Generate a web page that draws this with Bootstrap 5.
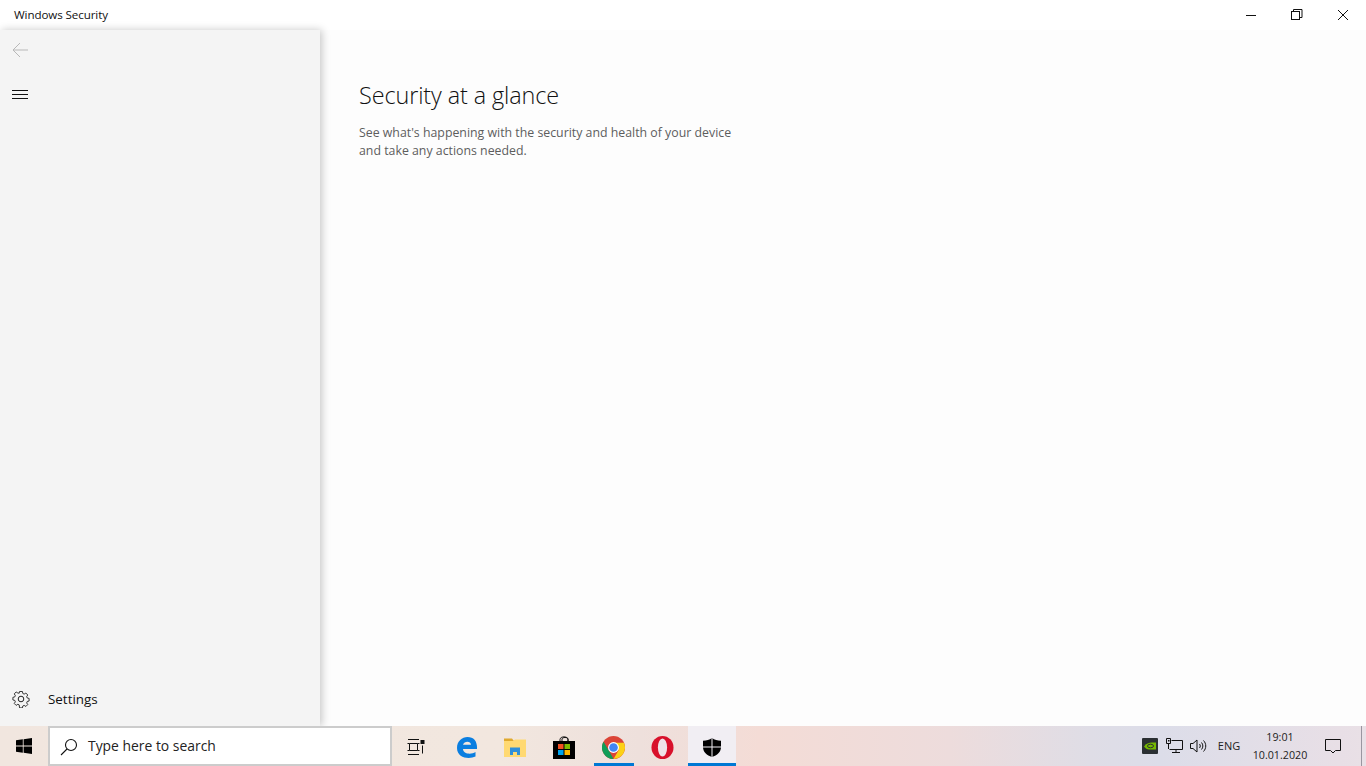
<!doctype html>
<html lang="en"><head><meta charset="utf-8"><title>Windows Security</title>
<link rel="stylesheet" href="https://cdn.jsdelivr.net/npm/bootstrap@5.3.0/dist/css/bootstrap.min.css">
<style>
html,body{height:766px;overflow:hidden;}
body{font-family:"Open Sans","Noto Sans",sans-serif;background:#fff;color:#000;}
.win-root{height:766px;}
.title-row{height:30px;background:#fff;}
.win-title{font-size:11.6px;line-height:29px;padding-left:14px;color:#111;letter-spacing:-.1px;}
.win-ctrl{width:46px;height:30px;}
.win-main{height:696px;background:#fdfdfd;}
.side-pane{width:320px;background:#f4f4f4;box-shadow:2px 0 8px rgba(0,0,0,.22);z-index:1;}
.pane-btn{height:49px;padding-left:12px;}
.pane-top{height:40px;}
.set-row{height:54px;padding-left:12px;}
.set-label{font-size:13.4px;margin-left:18px;color:#111;padding-top:1px;}
.main-pane{padding:49px 0 0 39px;}
.page-title{font-size:23.4px;line-height:32px;font-weight:300;margin:0;color:#111;letter-spacing:-.1px;}
.page-sub{font-size:12.33px;line-height:18px;color:#5d5d5d;margin:13px 0 0;width:380px;}
.task-bar{height:40px;background:linear-gradient(90deg,#f1e6df 0,#f2e7df 500px,#eee0dc 640px,#f4dcd6 760px,#eddcdc 950px,#dfdde6 1090px,#dcdde9 1160px,#e8dfe6 1340px,#e9e0e6 100%);}
.start-btn{width:48px;height:40px;}
.search-box{width:344px;height:40px;background:#fff;border:2px solid #ccc;padding-top:1px;}
.search-glass{margin-left:10px;}
.search-text{font-size:13.9px;color:#222;margin-left:10px;}
.task-ico{width:48px;height:40px;padding-top:2px;position:relative;}
.gap-one{margin-left:1px;}
.gap-two{margin-left:2px;}
.gap-three{margin-left:3px;}
.task-on::after{content:"";position:absolute;left:5px;right:3px;bottom:0;height:3px;background:#0078d4;}
.task-sel{background:#f1eef3;}
.task-sel::after{left:0;right:0;}
.tray-ico{width:24px;height:40px;}
.tray-lang{font-size:11px;width:38px;color:#222;text-align:center;}
.tray-clock{font-size:10.7px;line-height:18px;width:58px;margin-left:3px;text-align:center;color:#222;}
.tray-note{width:48px;height:40px;margin-right:4px;}
.show-edge{width:1px;height:40px;background:#9a96a0;margin-right:4px;}
</style></head><body>
<div class="win-root d-flex flex-column">
 <div class="title-row d-flex justify-content-between">
  <div class="win-title">Windows Security</div>
  <div class="d-flex">
   <div class="win-ctrl d-flex align-items-center justify-content-center"><svg width="12" height="12"><path d="M1 6.500h10" stroke="#111"/></svg></div>
   <div class="win-ctrl d-flex align-items-center justify-content-center"><svg width="12" height="12" fill="none" stroke="#111"><rect x=".5" y="2.500" width="8" height="8"/><path d="M2.500 2.500v-2h8.500v8h-2"/></svg></div>
   <div class="win-ctrl d-flex align-items-center justify-content-center"><svg width="12" height="12"><path d="M1 1l10 10M11 1L1 11" stroke="#111"/></svg></div>
  </div>
 </div>
 <div class="win-main d-flex">
  <div class="side-pane d-flex flex-column">
   <div class="pane-top pane-btn d-flex align-items-center"><svg width="16" height="16" fill="none" stroke="#b8b8b8"><path d="M16 8H1M8 1L1 8l7 7"/></svg></div>
   <div class="pane-btn d-flex align-items-center"><svg width="16" height="16" stroke="#111"><path d="M0 3.500h16M0 7.500h16M0 11.500h16"/></svg></div>
   <div class="flex-grow-1"></div>
   <div class="set-row d-flex align-items-center"><svg width="18" height="18" viewBox="0 0 18 18" fill="none" stroke="#222"><circle cx="9" cy="9" r="2.800"/><path d="M7.400 1h3.200l.4 2.200 1.500.7 1.900-1.200 2.100 2.200-1.200 1.800.6 1.500 2.100.5v2.900l-2.100.5-.6 1.600 1.200 1.800-2.100 2.100-1.900-1.200-1.500.7-.4 2.100H7.400L7 15.900l-1.500-.7-1.900 1.200-2.100-2.100 1.200-1.800-.6-1.600L0 10.400V7.500l2.100-.5.6-1.500L1.500 3.700l2.100-2.200 1.900 1.200L7 2.900z" transform="translate(.9 .6) scale(.9)"/></svg><span class="set-label">Settings</span></div>
  </div>
  <div class="main-pane flex-grow-1">
   <h1 class="page-title">Security at a glance</h1>
   <p class="page-sub">See what's happening with the security and health of your device and take any actions needed.</p>
  </div>
 </div>
 <div class="task-bar d-flex align-items-center position-relative" style="z-index:2">
  <div class="start-btn d-flex align-items-center justify-content-center"><svg width="16" height="16" viewBox="0 0 16 16" fill="#000"><path d="M0 2.300 6.800 1.300V7.600H0zM7.600 1.200 16 0V7.600H7.600zM0 8.400H6.800V14.700L0 13.700zM7.600 8.400H16V16L7.600 14.800z"/></svg></div>
  <div class="search-box d-flex align-items-center">
   <svg class="search-glass" width="18" height="18" viewBox="0 0 18 18" fill="none" stroke="#111" stroke-width="1.100"><circle cx="11" cy="7" r="5.500"/><path d="M7 11 1 17"/></svg>
   <span class="search-text">Type here to search</span>
  </div>
  <div class="task-ico d-flex align-items-center justify-content-center"><svg width="18" height="16" viewBox="0 0 18 16" fill="none" stroke="#111"><path d="M1 .5h11M1 15.500h11M2.500 4.500h8v7h-8zM.5 4.500h2M.5 11.500h2M10.500 4.500h2M10.500 11.500h2M15.500 6.500v8"/><rect x="14" y="1.500" width="3" height="3" fill="#111"/></svg></div>
  <div class="task-ico gap-three d-flex align-items-center justify-content-center"><svg width="22" height="22" viewBox="0 0 22 22"><path fill="#0a7ee0" d="M1 12C1 5 6 1 11.500 1 18 1 21.500 5.500 21 13H7c0 5 8 6 12.500 3v4.500c-6 3-18.500 2-18.500-8.500zM7 8.800h8c0-4-7-4-8 0z"/></svg></div>
  <div class="task-ico d-flex align-items-center justify-content-center"><svg width="22" height="20" viewBox="0 0 22 20"><path fill="#e0a92e" d="M0 1.500h8l2 2.500H0z"/><path fill="#ffd972" d="M0 4h9l2-1.500h11V20H0z"/><path fill="#2f8fd8" d="M6 18v-7.500h10V18h-3v-3H9v3z"/></svg></div>
  <div class="task-ico gap-one d-flex align-items-center justify-content-center"><svg width="24" height="24" viewBox="0 0 24 24"><path fill="none" stroke="#111" d="M8 7V4.500C8 1 16 1 16 4.500V7M10 7V4c0-2 6-2 6 0v3"/><path d="M1 6h22v18H1z" fill="#000"/><path fill="#f25022" d="M6 9h5.500v5H6z"/><path fill="#7fba00" d="M12.500 9H18v5h-5.500z"/><path fill="#00a4ef" d="M6 15h5.500v5H6z"/><path fill="#ffb900" d="M12.500 15H18v5h-5.500z"/></svg></div>
  <div class="task-ico gap-one task-on d-flex align-items-center justify-content-center"><svg width="23" height="23" viewBox="0 0 24 24"><circle cx="12" cy="12" r="12" fill="#db4437"/><path fill="#0f9d58" d="M12 24A12 12 0 0 1 1.600 6l5.700 9.500L12 24z"/><path fill="#fcd116" d="M12 24l5.500-9.500L12 7h10.900A12 12 0 0 1 12 24z"/><circle cx="12" cy="12" r="5.700" fill="#fff"/><circle cx="12" cy="12" r="4.500" fill="#4285f4"/></svg></div>
  <div class="task-ico gap-one d-flex align-items-center justify-content-center"><svg width="23" height="23" viewBox="0 0 24 24"><ellipse cx="12" cy="12" rx="11.500" ry="12" fill="#d8112b"/><ellipse cx="12" cy="12" rx="4.800" ry="9.500" fill="#efe3e8"/></svg></div>
  <div class="task-ico gap-two task-on task-sel d-flex align-items-center justify-content-center"><svg width="18" height="19" viewBox="0 0 18 19"><path fill="#000" d="M9 0c2.500 1.800 5.500 2.600 9 2.700v6.300c0 5-3.800 8.300-9 10-5.200-1.700-9-5-9-10V2.700C3.500 2.600 6.500 1.800 9 0z"/><path stroke="#f1eef3" d="M9 0v19M0 9h18"/></svg></div>
  <div class="flex-grow-1"></div>
  <div class="tray-ico d-flex align-items-center justify-content-center"><svg width="16" height="16" viewBox="0 0 16 16"><rect width="16" height="16" rx="1" fill="#2b3033"/><path fill="#76b900" d="M2 8.500C4 5.500 7 4.500 10 4.500h4v7H7C5 11.500 3.500 10.500 2 8.500z"/><ellipse cx="8.500" cy="8" rx="3" ry="1.800" fill="none" stroke="#2b3033"/></svg></div>
  <div class="tray-ico d-flex align-items-center justify-content-center"><svg width="17" height="16" viewBox="0 0 17 16" fill="none" stroke="#111"><path d="M5.500 2.500h11v9h-13M10 11.500v3M6 14.500h8M.5.500h4v5h-4z"/><rect x="2" y="2" width="1.500" height="1.500" fill="#111" stroke="none"/><path d="M2.500 5.500V11"/></svg></div>
  <div class="tray-ico d-flex align-items-center justify-content-center"><svg width="17" height="14" viewBox="0 0 17 14" fill="none" stroke="#111"><path d="M.5 4.500h2.500L7 1v12L3 9.500H.5zM9.500 5c1 1.200 1 2.800 0 4M11.500 3.500c1.800 2 1.800 5 0 7M13.500 1.500c3 3.200 3 7.800 0 11"/></svg></div>
  <div class="tray-lang">ENG</div>
  <div class="tray-clock"><div>19:01</div><div>10.01.2020</div></div>
  <div class="tray-note d-flex align-items-center justify-content-center"><svg width="16" height="16" viewBox="0 0 16 16" fill="none" stroke="#111"><path d="M.5 1.500h15v11h-5L8 15l-2.500-2.500h-5z"/></svg></div>
  <div class="show-edge"></div>
 </div>
</div>
<script src="https://cdn.jsdelivr.net/npm/bootstrap@5.3.0/dist/js/bootstrap.bundle.min.js"></script>
</body></html>
